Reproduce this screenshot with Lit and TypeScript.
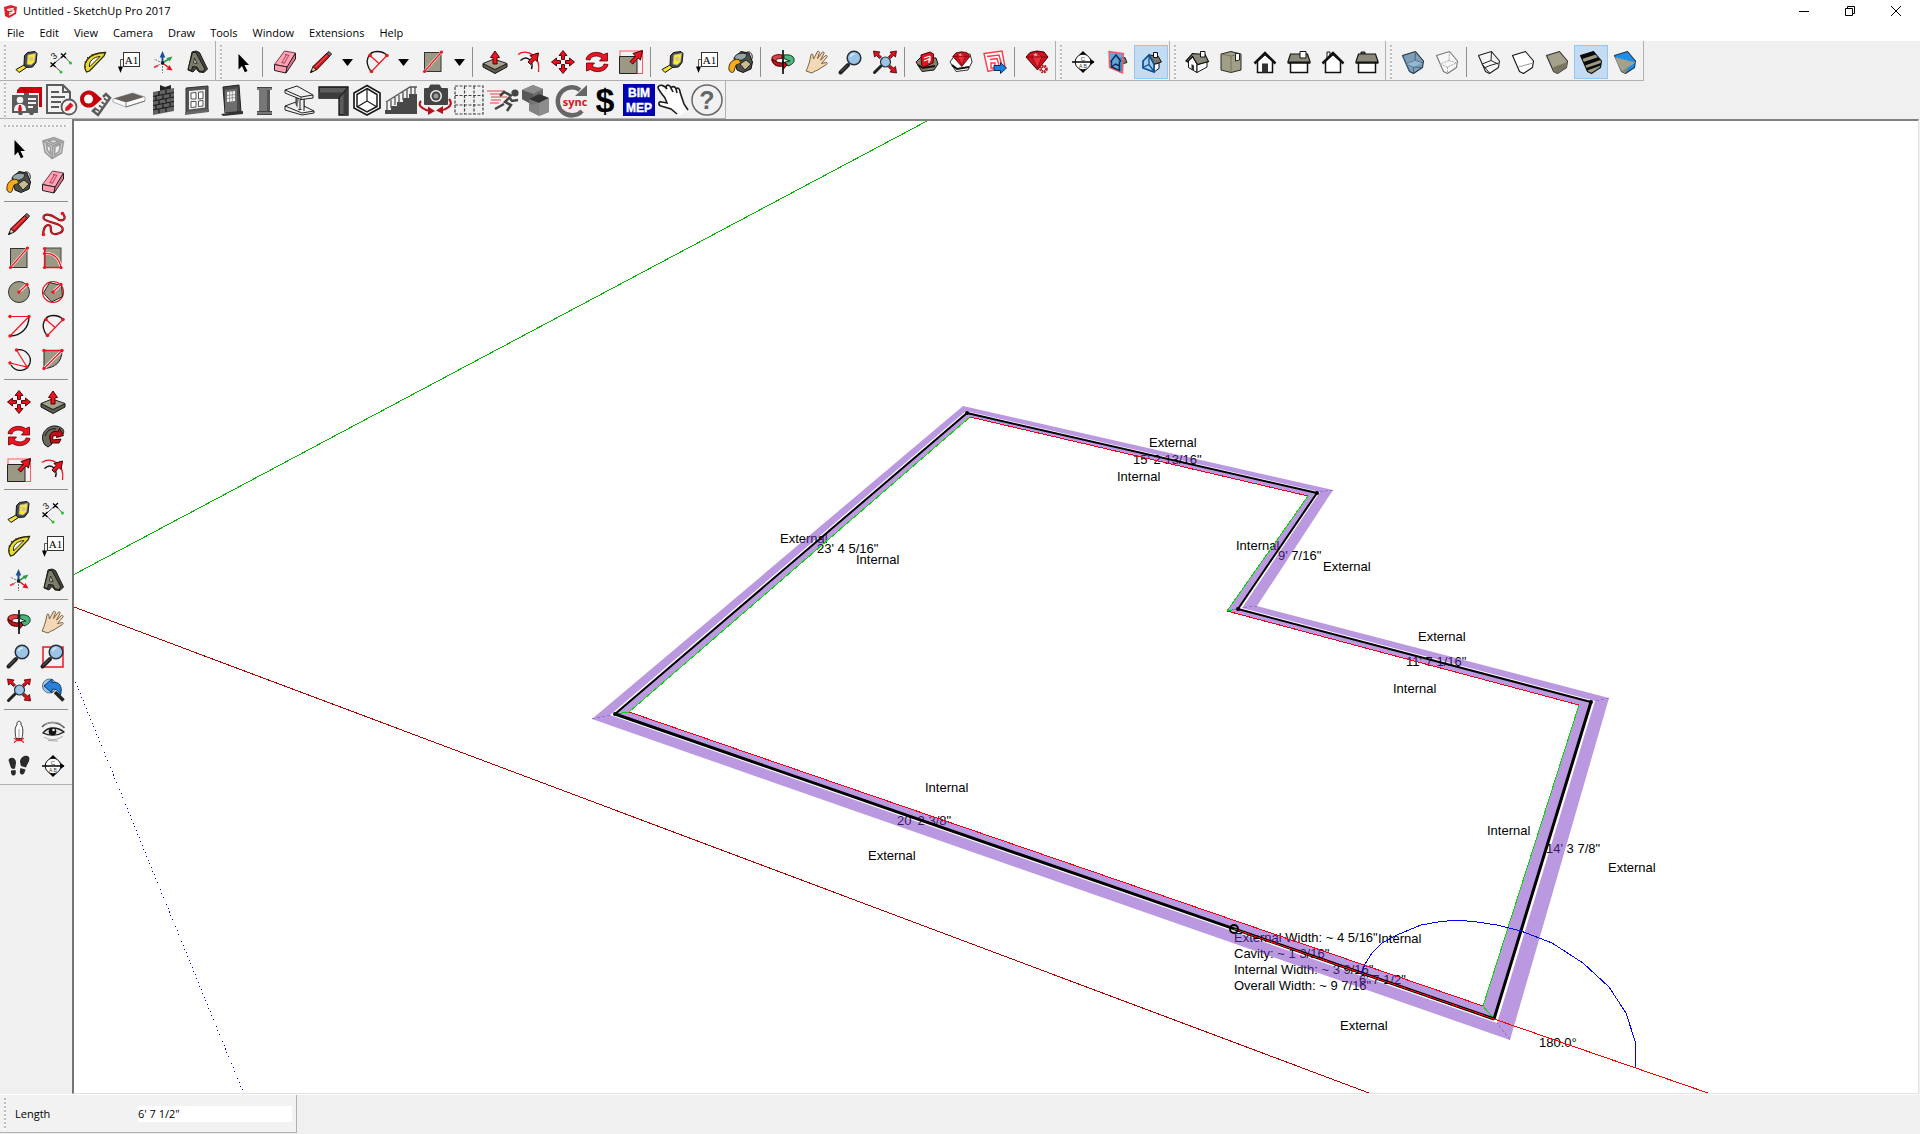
import { LitElement, html, css, svg } from "lit";
import { customElement, property } from "lit/decorators.js";

/* ---------- small tool icons, drawn on a 24 x 24 grid ---------- */

const magnifier = svg`
  <path d="M1.500 22.500 9 15" stroke="#222" stroke-width="4" stroke-linecap="round"/>
  <path d="M2 21.500 8 15.500" stroke="#6a6a6a" stroke-width="1"/>
  <circle cx="15" cy="8" r="6.800" fill="#9cc4e6" stroke="#26303a" stroke-width="1.500"/>
  <path d="M11.500 7a4 4 0 0 1 4-3" stroke="#d8ecfa" stroke-width="1.500" fill="none"/>`;

const arrowHead = (t: string) =>
  svg`<g transform=${t}><path d="M12 .500 16 5.500H13.500V9.500H10.500V5.500H8z" fill="#f00d1c" stroke="#3a0006" stroke-width=".9"/></g>`;

const bigArrow = svg`<path d="M11 11.500 16.500 6 14 3.500 23.500.500 21.500 10 19 7.800 13.800 14z" fill="#f0121f" stroke="#300" stroke-width="1"/>`;

const section = svg`
  <path d="M12 1 16 5H8zM12 23 8 19h8zM23.500 12l-5 4V8z" fill="#000"/>
  <circle cx="12" cy="12" r="7.800" fill="#fff" stroke="#111" stroke-width="1"/>
  <path d="M1 12H23" stroke="#000" stroke-width="1.500"/>
  <text x="12" y="10.500" font-size="6" text-anchor="middle" fill="#333">C</text>
  <text x="12" y="18" font-size="5" text-anchor="middle" fill="#333">A B</text>`;

const cube = (fill: string, line = "#222") => svg`
  <path d="M1.500 5.500 14.500 1.500 22.500 11 21.500 17.500 12.500 23.500 8.500 21.500z" fill=${fill} stroke=${line} stroke-width="1.100" stroke-linejoin="round"/>`;

const frontHouse = svg`
  <path d="M4.500 11V22.500H19.500V11L12 4.500z" fill="#fff" stroke="#111" stroke-width="1.500"/>
  <path d="M1.500 13.500 12 3 22.500 13.500" fill="none" stroke="#111" stroke-width="2.500"/>`;

const sideHouse = svg`
  <path d="M3.500 12H20.500V22.500H3.500z" fill="#fff" stroke="#111" stroke-width="1.500"/>
  <path d="M3.500 4H20.500L23 11.500V13H1V11.500z" fill="#8b897a" stroke="#111" stroke-width="1.200"/>
  <path d="M1 12.500H23" stroke="#111" stroke-width="2"/>`;

const gem = svg`
  <path d="M1 7 5 2.500 12 1 19 2 23 7 12.500 20z" fill="#d3101c" stroke="#3a0006"/>
  <path d="M1 7H23M7 7 12 2 17 7 12.500 18z" fill="#e8303c" stroke="#7d0610" stroke-width=".8"/>
  <path d="M8 5l3-2 1 3z" fill="#ffc4c4"/>`;

const tray = svg`
  <path d="M1 12 6 7 21 8 23 14 19 20 7 21.500z" fill="#85836f" stroke="#111"/>
  <path d="M3 15 8 18 20 16" fill="none" stroke="#111" stroke-width="2"/>`;

const ICONS: Record<string, unknown> = {
  tape: svg`
    <path d="M1 19.500 9 15l2.500 2.500L4 22.500z" fill="#f5e52a" stroke="#111"/>
    <path d="M9.500 5.500 12.500 2.500 20 1.500 22 3.500 21 12.500 17.500 17 11 17.500 9 15z" fill="#4b4b4b" stroke="#111"/>
    <path d="M13 5 20.500 3.500 19.500 12 16 15 12 14z" fill="#ffee22" stroke="#a8a8a8" stroke-width=".8"/>
    <circle cx="16.300" cy="9" r="2.400" fill="#cfc98a"/>`,
  dims: svg`
    <path d="M4 14.500 14.500 5.500M4 14.500 12 22M14.500 5.500 21.500 13" stroke="#555" fill="none"/>
    <path d="M1.500 12.500 6.500 17M6.500 12 1.500 17M12 3.500 17 8M17 3 12 8" stroke="#000" stroke-width="1.300"/>
    <text x="4" y="9" font-size="9" transform="rotate(-40 6 8)" fill="#111">3</text>
    <circle cx="12" cy="22" r="1.500" fill="#1ec52c"/><circle cx="21.500" cy="13" r="1.500" fill="#1ec52c"/>`,
  protractor: svg`
    <path d="M3.500 22C-1.500 14 5 2.500 22.500 2.500L21 6 6.500 21z" fill="#e9dc37" stroke="#2b2800" stroke-width="1.300"/>
    <path d="M6.500 17C5.500 11.500 10 7 17 6.500z" fill="#f2f2f2" stroke="#2b2800"/>
    <path d="M3 16.500 1.500 17M3.500 12.500 1.700 12M5.500 8.500 4 7M9.500 5.500 8.800 4M14 4.300v-1" stroke="#2b2800"/>`,
  label: svg`
    <rect x="6.500" y="2.500" width="16" height="14" fill="#fff" stroke="#333"/>
    <path d="M6 9.500H3.500V17" fill="none" stroke="#555"/>
    <path d="M1 16.500H6L3.500 23z" fill="#000"/>
    <text x="14.500" y="13.500" font-size="11" text-anchor="middle" font-family="Liberation Serif, serif" fill="#000">A1</text>`,
  axes: svg`
    <path d="M11.500 13V23M11.500 13 3 9M11.500 13 3 17.500" stroke="#777" stroke-dasharray="2 1" fill="none"/>
    <path d="M3 17.500 7 15.500" stroke="#e33" stroke-width="1.500"/>
    <path d="M11.500 13V6" stroke="#1c4f9c" stroke-width="2"/><path d="M11.500 1 14.300 7.500H8.700z" fill="#1c4f9c"/>
    <path d="M11.500 13 17 9.500" stroke="#2a9b45" stroke-width="1.500"/><path d="M21.500 6.500 18.500 11.500 15.500 8z" fill="#2a9b45"/>
    <path d="M11.500 13 17 17" stroke="#e0101c" stroke-width="1.500"/><path d="M21.500 20.500 15.500 19.500 18.500 15z" fill="#e0101c"/>
    <path d="M10 11.500h3v3h-3z" fill="#123"/>`,
  text3d: svg`
    <path d="M7 2 11 1 14.500 2.500 22.500 19 19 22.500 14 22 11 18.500 8 22 3 20z" fill="#45443c" stroke="#1a1a16"/>
    <path d="M3 19.500 7.500 2.500 11 2.500 19.500 18.500 18.500 21.500 14 21 12 17 7.500 16.500 6.500 20.500z" fill="#7d7b6b" stroke="#1a1a16"/>
    <path d="M8.500 13 9.500 8 12 13.500z" fill="#d8d8d0" stroke="#1a1a16" stroke-width=".8"/>`,
  select: svg`<path d="M7.500 4V19.500L11 16 13.800 22.300 16.500 21 13.500 15H18z" fill="#000"/>`,
  component: svg`
    <path d="M2 5 13 1.500 22.500 5.500 20.500 17 11 22.500 4 16z" fill="#d6d6d6" stroke="#9a9a9a" stroke-width="1.500"/>
    <path d="M2 5 12 9.500 22.500 5.500M12 9.500 11 22.500M5.500 8.500 9.500 11V18L6.500 14.500zM14 10.500 19.500 8.500 18 15.500 13.500 19zM7 5l6-1.500 5 2-6 2z" fill="#efefef" stroke="#9a9a9a" stroke-width="1.500"/>`,
  eraser: svg`
    <path d="M11.500 1 22.500 3 14.500 17 1.500 14.500z" fill="#ffa3b5" stroke="#7a3a48"/>
    <path d="M1.500 14.500 14 17 13 23 1.500 20.500z" fill="#ff9db1" stroke="#222"/>
    <path d="M14 17 22.500 3 22.500 9 13 23z" fill="#e0748c" stroke="#222"/>
    <path d="M9 12.500 13.500 4.500M11.500 13 16 5M12 4.500l4 .8M8.500 12.500l3.500.8" stroke="#b0405a" fill="none"/>`,
  pencil: svg`
    <path d="M1.500 22.500 4 16.500 7.500 20z" fill="#e6c88f" stroke="#222"/><path d="M1 23 2.500 19.800 4.500 21.800z" fill="#111"/>
    <path d="M4 16.500 17.500 3.500 20.500 6.500 7.500 20z" fill="#d3161d" stroke="#300" />
    <path d="M6 17.500 19 4.500" stroke="#f2706f" stroke-width="1"/>
    <path d="M17.500 3.500 20 1.500 22.500 4 20.500 6.500z" fill="#8a5a55" stroke="#222"/>`,
  freehand: svg`
    <g transform="translate(1 0)">
      <path d="M20.500 1.500C26 7 20 11 14 6 9 2 1 1 1.500 6 3 11 18 10 20.500 16 22 21 13 23.500 10 21 7 18 11 13 6 13 2 14 1 19 1.500 22.500" fill="none" stroke="#8c0008" stroke-width="2.200"/>
      <path d="M20.500 1.500C26 7 20 11 14 6 9 2 1 1 1.500 6 3 11 18 10 20.500 16 22 21 13 23.500 10 21 7 18 11 13 6 13 2 14 1 19 1.500 22.500" fill="none" stroke="#f0343c" stroke-width=".8"/>
      <circle cx="1.500" cy="22.500" r="1.800" fill="#f0141e"/><circle cx="20.500" cy="1.500" r="1.800" fill="#f0141e"/>
    </g>`,
  rect: svg`
    <rect x="3.500" y="2.500" width="16.500" height="19" fill="#9b9984" stroke="#333"/>
    <path d="M3.500 21.500 20.500 2" stroke="#fff" stroke-width="2.500"/><path d="M3.500 21.500 20.500 2" stroke="#f01420" stroke-width="1.300"/>
    <circle cx="3.500" cy="21.500" r="1.600" fill="#f01420"/><circle cx="20.500" cy="2" r="1.600" fill="#f01420"/>`,
  rotrect: svg`
    <rect x="4" y="2" width="16" height="19.500" fill="#9b9984" stroke="#444"/>
    <path d="M3.500 7.500C12 6.500 18 12 20 21.500" fill="none" stroke="#fff" stroke-width="3"/>
    <path d="M3.500 7.500C12 6.500 18 12 20 21.500M3.500 21.500H20M3.500 2V21.500" fill="none" stroke="#f01420" stroke-width="1.300"/>
    <circle cx="3.500" cy="2.500" r="1.600" fill="#f01420"/><circle cx="3.500" cy="7.500" r="1.600" fill="#f01420"/><circle cx="3.500" cy="21.500" r="1.600" fill="#f01420"/><circle cx="20" cy="21.500" r="1.600" fill="#f01420"/>`,
  circle: svg`
    <circle cx="12" cy="12" r="10.500" fill="#9b9984" stroke="#333"/>
    <path d="M12 12 20 4.500" stroke="#fff" stroke-width="3"/><path d="M12 12 20 4.500" stroke="#f01420" stroke-width="1.300"/>
    <circle cx="12" cy="12" r="1.700" fill="#f01420"/><circle cx="20" cy="4.500" r="1.700" fill="#f01420"/>`,
  polygon: svg`
    <circle cx="12" cy="12" r="10.500" fill="none" stroke="#f01420" stroke-width="1.200"/>
    <path d="M8.500 2.500 20.500 5.500 21.500 16.500 10.500 22 2.500 13z" fill="#9b9984" stroke="#222"/>
    <path d="M12 12 20 4.500" stroke="#fff" stroke-width="3"/><path d="M12 12 20 4.500" stroke="#f01420" stroke-width="1.300"/>
    <circle cx="12" cy="12" r="1.700" fill="#f01420"/><circle cx="20" cy="4.500" r="1.700" fill="#f01420"/>`,
  arcCorner: svg`
    <path d="M22 2.500C22 14 14 22 3 22" fill="none" stroke="#111" stroke-width="1.300"/>
    <path d="M3 2.500H22L3 22" fill="none" stroke="#f01420" stroke-width="1.200"/>
    <circle cx="3" cy="2.500" r="1.700" fill="#f01420"/><circle cx="22" cy="2.500" r="1.700" fill="#f01420"/><circle cx="3" cy="22" r="1.700" fill="#f01420"/>`,
  arc: svg`
    <path d="M6 21.500C-2 11 4 1.500 12 1.500 17 1.500 20 3 22 5.500" fill="none" stroke="#111" stroke-width="1.300"/>
    <path d="M6.500 21.500 22 5.500M5 5.500 14 13.500" fill="none" stroke="#f01420" stroke-width="1.200"/>
    <circle cx="6.500" cy="21.500" r="1.800" fill="#f01420"/><circle cx="22" cy="5.500" r="1.800" fill="#f01420"/><circle cx="5" cy="5.500" r="1.800" fill="#f01420"/>`,
  arc3: svg`
    <path d="M9.500 2C18 0 25 8 23 15 20 24 9 25 4 17" fill="none" stroke="#111" stroke-width="1.300"/>
    <path d="M9.500 2 20 19 3 15" fill="none" stroke="#f01420" stroke-width="1.200"/>
    <circle cx="9.500" cy="2" r="1.700" fill="#f01420"/><circle cx="20" cy="19" r="1.700" fill="#f01420"/><circle cx="3" cy="15" r="1.700" fill="#f01420"/>`,
  pie: svg`
    <path d="M3 2.500H21C21 14 14 20 3 20.500z" fill="#9b9984" stroke="#222"/>
    <path d="M3 20.500 21 2.500" stroke="#fff" stroke-width="3"/>
    <path d="M3 20.500 21 2.500M3 2.500H21" stroke="#f01420" stroke-width="1.300"/>
    <circle cx="3" cy="2.500" r="1.700" fill="#f01420"/><circle cx="21" cy="2.500" r="1.700" fill="#f01420"/><circle cx="3" cy="20.500" r="1.700" fill="#f01420"/>`,
  pushpull: svg`
    <path d="M0 13.500 12 19.500 24 13.500V17L12 23.500 0 17z" fill="#5e5d4e" stroke="#111"/>
    <path d="M0 13.500 11 9 24 13.500 12 19.500z" fill="#a5a38d" stroke="#222"/>
    <path d="M12 1 16.500 7.500H14V14H10V7.500H7.500z" fill="#f01420" stroke="#500"/>`,
  offset: svg`
    <path d="M1 4.500C10-2 24 6 21.500 22" fill="none" stroke="#f01420" stroke-width="1.300"/>
    <path d="M3.500 10.500C10 4.500 17 11 14.500 19" fill="none" stroke="#111" stroke-width="1.500"/>
    <path d="M11 12 15 7.500 13 5.500 21.500 3 20 11.500 18 9.500 13.500 14.500z" fill="#f0121f" stroke="#300"/>`,
  move: svg`${arrowHead("")}${arrowHead("rotate(90 12 12)")}${arrowHead("rotate(180 12 12)")}${arrowHead("rotate(270 12 12)")}`,
  rotate: svg`
    <path d="M1 9.500C2 3 12 0 18.500 4.500L22.500 3V11H14.500L17 8C12 4.500 6 6 5 10z" fill="#f0121f" stroke="#5a0008" stroke-width=".8"/>
    <path d="M23 14.500C22 21 12 24 5.500 19.500L1.500 21V13H9.500L7 16C12 19.500 18 18 19 14z" fill="#f0121f" stroke="#5a0008" stroke-width=".8"/>`,
  scale: svg`
    <rect x="1" y="1" width="22.500" height="22.500" fill="none" stroke="#ff5a60"/>
    <path d="M.500 6.500H18V23.500H.500z" fill="#9b9984" stroke="#222"/>${bigArrow}`,
  follow: svg`
    <path d="M4 21C-3 11 6 1 15 2 22 3 24 7 22 10L16 8C12 7 8 10 9 15L11 20 7 23z" fill="#6b695d" stroke="#111"/>
    <path d="M4.500 12C5 7 10 4 15 5" fill="none" stroke="#111"/>
    <path d="M9 14C8 9 13 6 17 8L18.500 4.500 22.500 11.500 15.500 13.500 16 12C13 11 11 12 12 16L20 15 18 19 10 19z" fill="#c3121b" stroke="#400"/>`,
  paint: svg`
    <path d="M5 8 12 1.500 20 3 23.500 12 22 19 14 22.500 8 20z" fill="#4c4e48" stroke="#111"/>
    <path d="M5 8C7 3 14 2 18 4.500 17 10 11 11 8 10z" fill="#93a5a8" stroke="#222"/>
    <path d="M11 14 17 10 22 14 16 20z" fill="#c8ba92" stroke="#222"/>
    <path d="M0 20C-1 13 4 8.500 10 9.500L12 13 7 15 5 21C5 23 1 23 0 20z" fill="#f6aa1f" stroke="#4c3000"/>
    <path d="M18 2C22 1 24 5 23 9" fill="none" stroke="#222"/>`,
  orbit: svg`
    <path d="M1 8C1 5 8 4 11 5V8.500C7 8.500 5 9 5 11H1z" fill="#d9444a" stroke="#500"/>
    <path d="M13 5C20 4 24 7 23 11 23 13 20 15 17 16L14 12 19 11 13 8.500z" fill="#4fb57e" stroke="#0d3a20"/>
    <path d="M1 9C1 16 8 17 12 16V19.500L16 15 12 11V13C8 13 5 12 1 9z" fill="#b8141e" stroke="#400"/>
    <path d="M12 0V24" stroke="#111" stroke-width="1.700"/>`,
  pan: svg`
    <path d="M1 21C3 18 3 15 4.500 12L6 4.500C7 3.500 8 4 8 6L8.500 9 12.500 1.500C13.500 1 14.500 1.500 14.500 2.500L12.500 8.500 17.500 2C18.500 1.500 19.500 2.500 19 3.500L15.500 10 20.500 5.500C21.500 5 22.500 6 22 7L16.500 13.500 21 12.500C22.500 12.500 22.500 14 21.500 14.500L15 18.500C12 21 10 20.500 7 23z" fill="#f3d8b6" stroke="#6d5436" stroke-width=".9"/>`,
  zoom: magnifier,
  zoomWindow: svg`<rect x="2" y="3" width="20" height="20" fill="none" stroke="#f01420" stroke-width="1.500"/>${magnifier}`,
  extents: svg`
    <path d="M1.500 22.500 8 16" stroke="#222" stroke-width="3" stroke-linecap="round"/>
    <circle cx="12.500" cy="12" r="5" fill="#9cc4e6" stroke="#26303a" stroke-width="1.200"/>
    <path d="M.500 1 7 2 5.500 4 8.500 7 6.500 8.500 3.500 5.500 1.500 7zM23.500 1 22.500 7 20.500 5.500 17.500 8.500 15.500 6.500 18.500 4 17 2zM23.500 23 17 22 18.500 20 15.500 17.500 17.500 15.500 20.500 18 22.500 16.500z" fill="#e0101c" stroke="#400" stroke-width=".8"/>`,
  previous: svg`
    <circle cx="8.500" cy="8" r="7" fill="#9cc4e6" stroke="#55708a"/>
    <path d="M14 14 22.500 22.500" stroke="#222" stroke-width="3.500"/>
    <path d="M3 8 11 1V4.500C18 3 22 8 19.500 17 17 12 15 10.500 11 11.500V15z" fill="#2a80d8" stroke="#0c3766"/>`,
  warehouse: svg`${tray}<path d="M6 5 15 2 18.500 4 18 13 9 17 6.500 15z" fill="#e0141f" stroke="#500"/><path d="M9 8l6-2M9 11l5-2v4M15 6v5" stroke="#fff" stroke-width="1.300" fill="none"/>`,
  extwarehouse: svg`<path d="M1 12 6 5 21 4 23 12 19 20 7 21.500z" fill="#fff" stroke="#333"/><path d="M3 15 8 19 20 17" fill="none" stroke="#111" stroke-width="2"/><g transform="translate(3 1) scale(.78)">${gem}</g>`,
  share: svg`
    <path d="M1 3.500 19 1 22 17 5 21.500z" fill="#fff" stroke="#ff3a44" stroke-width="1.400"/>
    <path d="M4 6.500 16 5 19 16M7 9.500 14 8.500 16 15M8 13h4v5H8z" fill="none" stroke="#ff3a44" stroke-width="1.400"/>
    <path d="M11 15.500H17.500V12.500L23.500 18 17.500 23.500V20.500H11z" fill="#1a80e0" stroke="#0b2f5a"/>`,
  extmanager: svg`${gem}<circle cx="18.500" cy="19" r="3.200" fill="#fff" stroke="#c8141e" stroke-width="2.200" stroke-dasharray="1.800 .8"/><circle cx="18.500" cy="19" r="2" fill="#fff" stroke="#b0101a"/>`,
  section,
  sectionDisplay: svg`
    <path d="M14 8 20 7.500 22 12.500 17 14v6l-3 2z" fill="#77766a" stroke="#222"/>
    <path d="M4 1.500 18.500 3.500 17.500 23 4.500 17.500z" fill="#4f97d6" fill-opacity=".85" stroke="#ff5560" stroke-width="1.300"/>
    <path d="M5.500 12 11 5 16 11.500M6.500 11v6l8 3.500v-9M6.500 17l4-3 4 2" fill="none" stroke="#0b2c4c" stroke-width="1.400"/>`,
  sectionCut: svg`
    <path d="M10 5 19 6 22.500 12 15 14.500z" fill="#77766a" stroke="#111"/><path d="M15 14.500 20 13V18.500L15 22z" fill="#fff" stroke="#111"/>
    <path d="M14.500 2.500h4v5h-4z" fill="#fff" stroke="#111"/>
    <path d="M4 11 10 5 15 14V22L4 18z" fill="#a9cfee" stroke="#0a4f93" stroke-width="1.700"/>
    <path d="M4 17.500l6-3 5 7M10 6v8.500" fill="none" stroke="#0a4f93" stroke-width="1.300"/>`,
  iso: svg`
    <path d="M3.500 10.500V17.500L12 22.500V14L8 7z" fill="#fff" stroke="#111"/><path d="M12 22.500 22 17V11L12 15z" fill="#fff" stroke="#111"/>
    <path d="M6.500 14 9 15.500V21L6.500 19.500z" fill="#333"/>
    <path d="M1 11 7.500 3.500 20 4.500 23.500 11.500 12.500 14.500 7.500 6.500 2.500 12z" fill="#8b897a" stroke="#111" stroke-width="1.200"/>
    <path d="M15.500 1.500h4.500v5.500h-4.500z" fill="#fff" stroke="#111"/>`,
  top: svg`
    <path d="M2 4 12 1.500 22 4V20L12 22.500 2 20z" fill="#a09e86" stroke="#2a2a20"/><path d="M12 6V22.500M2 4 12 6 22 4" fill="none" stroke="#77755f"/>
    <path d="M16.500 3.500h4V10L16.500 11z" fill="#fff" stroke="#222"/>`,
  front: svg`${frontHouse}<path d="M9 13.500h6V22.500H9z" fill="#333"/>`,
  right: svg`${sideHouse}<path d="M13 1.500h6V8h-6z" fill="#fff" stroke="#111"/>`,
  back: svg`<path d="M6 2h3v5l-3 3z" fill="#fff" stroke="#111"/>${frontHouse}`,
  left: svg`<path d="M6 2h4v3H6z" fill="#666" stroke="#111"/>${sideHouse}`,
  xray: svg`${cube("#7f9fb8", "#1d3142")}<path d="M1.500 5.500 5 14 14 10.500 22 13M14.500 1.500 14 10.500M8.500 21.500 5 14M5 14 12.500 17 21.500 17.500M12.500 17V23" fill="none" stroke="#46657e"/><path d="M5 14 14 10.500 21 13 12.500 17z" fill="#9cc4e0" fill-opacity=".7"/>`,
  backedges: svg`${cube("#f7f7f7", "#777")}<path d="M14.500 1.500 14 10.500 5 14M14 10.500 22 13M5 14 12.500 17 21.500 13M12.500 17V23" fill="none" stroke="#aaa" stroke-dasharray="2 1"/>`,
  wire: svg`${cube("#f6f6f6", "#222")}<path d="M14.500 1.500 14 10.500 5 14M14 10.500 21 14M7 18 13 15.500 21.500 13M5 14 12.500 23" fill="none" stroke="#222"/>`,
  hidden: svg`${cube("#fff", "#111")}<path d="M7.500 17 22 13" fill="none" stroke="#999"/>`,
  shaded: svg`${cube("#a3a18c", "#333")}<path d="M7.500 17.500 22.500 12 21.500 17.500 12.500 23.500 8.500 21.500z" fill="#77755f"/>`,
  textures: svg`${cube("#9b9984", "#111")}
    <path d="M1.500 5.500 14.500 1.500 17 4.500 3 9zM4.500 12 19 7.200 21.500 10 6 15.500zM7 18 22 13 22 15.500 8 20.500z" fill="#0a0a0a"/>`,
  mono: svg`${cube("#1a8fee", "#234")}<path d="M1.500 7 22.500 12.500 8.500 21.500z" fill="#a3a18c"/><path d="M8.500 21.500 16 16.500 12.500 23.500z" fill="#8b8973"/>`,
  camera: svg`
    <path d="M10 3.500C10 .500 14 .500 14 3.500V5C16.500 7 16 13 15 18.500H9C8 13 7.500 7 10 5z" fill="#fff" stroke="#333"/>
    <path d="M12 9V18" stroke="#888" stroke-width=".8"/>
    <path d="M7 22.500 12 19 17 22.500M7 18.500 12 20.500 17 18.500" stroke="#f01420" stroke-width="1.300" fill="none"/>`,
  eye: svg`
    <path d="M1 7C7 1 17 1 23.500 8" stroke="#555" stroke-width="1.500" fill="none"/>
    <path d="M2 13C7 6 17 7 23 12 17 16 8 16 2 13z" fill="#ddd" stroke="#222" stroke-width="1.300"/>
    <circle cx="11.500" cy="11.500" r="3.800" fill="#111"/><circle cx="12.500" cy="10" r="1.300" fill="#eee"/>
    <path d="M3 17C9 21 17 20 22 16M7 20.500 17 21M4 5C8 2 15 1 20 4" stroke="#aaa" fill="none"/>`,
  walk: svg`
    <path d="M1.500 6C3.500 2 9.500 4 9 9L8 14.500C6 15.500 4 14.500 3.500 12.500zM4 16.500 8.500 16C9.500 20 8 22 6 21.500 4 21 3.800 19 4 16.500z" fill="#2b2b2b"/>
    <path d="M13 8C13 3 19 0 22 3 23.500 7 20 10 19 13.500L14 12zM13.500 14 18.500 15.500C17.500 20 16 21 14.500 20.500 12.500 20 12.500 17 13.500 14z" fill="#2b2b2b"/>`,
};

/* ---------- large plugin icons, drawn on a 32 x 32 grid ---------- */

const PLUGINS: Record<string, unknown> = {
  profile: svg`
    <path d="M6 6 9 3H18L20 3H31V23H28V9H6z" fill="#c8000c"/>
    <path d="M1 11H13V9H18V11H27V29H23L22 31H19L18 29H12L11 31H8L7 29H1z" fill="#5b5b5b"/>
    <circle cx="9" cy="16" r="3.300" fill="#f1f1f1"/><path d="M3 27C3 22 5 20 9 20S15 22 15 27z" fill="#f1f1f1"/>
    <path d="M8 21h2l1 5-2 2-2-2z" fill="#d9101c"/><path d="M17 15h8M17 19h8M17 23h5" stroke="#f1f1f1" stroke-width="2"/>`,
  document: svg`
    <path d="M2 1H18L25 8V29H2z" fill="#f1f1f1" stroke="#5b5b5b" stroke-width="2"/><path d="M18 1V8H25" fill="none" stroke="#5b5b5b" stroke-width="2"/>
    <path d="M6 8h8M6 13h14M6 18h10M6 23h8" stroke="#5b5b5b" stroke-width="2"/>
    <circle cx="24" cy="23" r="7.500" fill="#f4f4f4" stroke="#5b5b5b" stroke-width="1.800"/>
    <path d="M20 27 20.500 23.500 25.500 18.500 28.500 21.500 23.500 26.500z" fill="#d81824"/>`,
  locate: svg`
    <path d="M17 24 14 27 19 31 31 14 27 10 24 13" fill="none" stroke="#5b5b5b" stroke-width="2.500"/>
    <path d="M17 25l3 2M20 21.500l3 2M22.500 18l3 2M25 14.500l3 2" stroke="#5b5b5b" stroke-width="2"/>
    <path d="M23 15 15 22C9 26 1 22 1 15S9 4 15 8z" fill="#c4000c"/><circle cx="9.500" cy="15" r="4.500" fill="#fff"/>`,
  slab: svg`
    <path d="M0 15 20 9 32 13V17L13 23 0 18z" fill="#fafafa" stroke="#999" stroke-width=".8"/>
    <path d="M1 14.500 19.500 9 31 13 13 18.500z" fill="#66605c"/><path d="M13 19V23L32 17" fill="none" stroke="#777"/>`,
  wall: svg`
    <g transform="translate(4 0)">
      <path d="M9 7V1L14 3 20 1V6z" fill="#222"/><path d="M2 8 23 4V27L2 31z" fill="#636363"/>
      <path d="M2 12.500 23 8.500M2 17 23 13M2 21.500 23 17.500M2 26 23 22M8 7v4M15 6v4M5 12v4M12 11v4M19 9v4M8 16v4M15 15v4M5 21v4M12 20v4M19 18v4M8 25v4M15 24v4" stroke="#1b1b1b" stroke-width="1.200"/>
    </g>`,
  window: svg`
    <path d="M5 4 27 2V26L5 29z" fill="#555" stroke="#333"/><path d="M4 28 28 25V28L4 31z" fill="#666"/>
    <path d="M8 7 24 5.500V23.500L8 25.500z" fill="#ededed"/><path d="M10 9 15 8.500V15H10zM17.500 8.200 22 7.800V14.500L17.500 15zM10 17.500H15V23L10 23.500zM17.500 17 22 16.500V22L17.500 22.500z" fill="#fff" stroke="#555"/>`,
  door: svg`
    <g transform="translate(1 0)">
      <path d="M7 3 23 1 25 28 9 29z" fill="#484848" stroke="#222"/><path d="M9 6 21 4.500V27L9 28.500z" fill="#6d6d6d"/>
      <path d="M11 8 19 7V17L11 18z" fill="#f2f2f2"/><path d="M13.500 8v10M16.300 7v10M11 11.500l8-1M11 14.500l8-1" stroke="#888" stroke-width=".8"/>
      <path d="M5 30 27 27V30L7 32z" fill="#333"/>
    </g>`,
  column: svg`<path d="M8 3H23V6H21V27H23V31H8V27H10V6H8z" fill="#777"/><path d="M8 3.500H23M8 27.500H23M8 30.500H23" stroke="#444"/><path d="M18 6h3v21h-3z" fill="#555"/>`,
  beam: svg`
    <path d="M2 22 13 18 29 26 31 27V29L19 31 2 26z" fill="#f0f0f0" stroke="#222"/>
    <path d="M13 9H21V24L16 26 13 20z" fill="#777" stroke="#333"/>
    <path d="M16 14 21 12V25L14 25z" fill="#ededed"/>
    <path d="M2 6 14 2 30 11V14L18 15.500 2 9z" fill="#f0f0f0" stroke="#222"/><path d="M2 6 18 13 30 11M2 22 19 29 31 27M18 13v2.500" fill="none" stroke="#222"/>
    <path d="M21 15V27M17 16V26" stroke="#222"/>`,
  roof: svg`<g transform="translate(1 0)"><path d="M1 3H30V31H21V14H1z" fill="#5c5c5c" stroke="#111" stroke-width="1.300"/><path d="M30 3 21 14H1V8.500H25.500V31H30z" fill="#3c3c3c"/><path d="M30 3 21 14" stroke="#111"/></g>`,
  hexagon: svg`
    <path d="M16 1.500 29 9V24L16 31 3 24V9z" fill="#fff" stroke="#1a1a1a" stroke-width="1.700"/>
    <path d="M16 4.500 26 10.500V22.500L16 28 6 22.500V10.500z" fill="none" stroke="#1a1a1a" stroke-width="1.500"/>
    <path d="M16 5V17L26 23M16 17 6 23" fill="none" stroke="#1a1a1a" stroke-width="1.200"/>`,
  stairs: svg`
    <path d="M0 30V26H6V22H12V18H18V14H24V10H32V30z" fill="#484848"/>
    <path d="M1 18 25 3H32M2 18v8M6 16v8M10 13v8M14 11v9M18 8v8M22 5v9M26 3v8M30 3v8" stroke="#555" fill="none" stroke-width="1.300"/>`,
  photo: svg`
    <path d="M6 5H10L12 1.500H20L22 5H28V20H6z" fill="#444" stroke="#444" stroke-linejoin="round" stroke-width="2"/>
    <circle cx="17" cy="12" r="6" fill="#f0f0f0"/><circle cx="17" cy="12" r="4.500" fill="#444"/><circle cx="17" cy="12" r="2.500" fill="#999"/>
    <path d="M2 17C-3 22 6 26 11 27M30 15C36 22 26 26 20 27" fill="none" stroke="#b4101a" stroke-width="2.200"/><path d="M9 22.500 16 27 9 31zM24 22 17 26.500 24 30z" fill="#b4101a"/>`,
  grid: svg`<path d="M2 2H30V30H2zM11.500 2V30M21 2V30M2 11.500H30M2 21H30" fill="none" stroke="#444" stroke-width="1.200" stroke-dasharray="3 1.500"/>`,
  run: svg`
    <path d="M0 7H18M3 10H16M4 13H20M4 16H14M3 19H12" stroke="#d8323a" stroke-width=".9"/>
    <circle cx="28" cy="9" r="3.600" fill="#444"/>
    <path d="M25 12 17 8 13 12M23 13 18 18 24 21 20 27M17 20 8 25M22 13 25 17 31 16" fill="none" stroke="#444" stroke-width="2.500"/>`,
  cubes: svg`
    <path d="M1 6 12 1 22 5V16L12 21 1 15z" fill="#6b6b6b"/><path d="M1 6 12 10 22 5 12 1z" fill="#8d8d8d"/><path d="M12 10V21L1 15V6z" fill="#585858"/>
    <path d="M8 15 18 10 28 14V28L18 32 8 27z" fill="#777" fill-opacity=".9"/><path d="M8 15 18 19 28 14 18 10z" fill="#333"/><path d="M18 19V32L28 28V14z" fill="#8d8d8d"/>`,
  sync: svg`
    <path d="M27 27A14 14 0 1 1 25 6" fill="none" stroke="#666" stroke-width="4.500"/><path d="M32 1V12H20z" fill="#666"/>
    <rect x="7" y="12" width="25" height="13" fill="#f1f1f1"/>
    <text x="20" y="22" font-size="11" font-weight="bold" text-anchor="middle" fill="#d8141e" font-family="Open Sans, sans-serif">sync</text>`,
  dollar: svg`<text x="16" y="28" font-size="34" font-weight="bold" text-anchor="middle" fill="#000" font-family="Liberation Sans, Arial, sans-serif">$</text>`,
  bim: svg`
    <rect x="0" y="0" width="32" height="32" fill="#0000b4"/>
    <g font-family="Liberation Sans, Arial, sans-serif" font-weight="bold" font-size="12" text-anchor="middle" fill="#fff" stroke="#fff" stroke-width=".4"><text x="16" y="13">BIM</text><text x="16" y="27.500">MEP</text></g>`,
  hand: svg`
    <path d="M1 3C3 1 6 3 11 12L9 4C10 1 13 1 14 4 15 2 18 2 19 5 21 3 23 5 23 8L27 20 31 26 22 32 14 25 4 22C1 21 1 17 5 18L10 19 3 7z" fill="#fff"/>
    <path d="M31 26 27 20 23 8C23 5 21 3 19 5 18 2 15 2 14 4 13 1 10 0 9 3L10 5C7 1 3 0 1 3 1 6 6 11 8 14L10 19 5 18C1 17 1 21 4 22L14 25 20 30M14 4 16 8M19 5 20 9" fill="none" stroke="#1c1c1c" stroke-width="1.600"/>`,
  help: svg`<circle cx="16" cy="16" r="15" fill="none" stroke="#666" stroke-width="1.500"/>
    <text x="16" y="25" font-size="25" font-weight="bold" text-anchor="middle" fill="#666" font-family="Liberation Sans, Arial, sans-serif">?</text>`,
};

/* ---------- toolbar descriptions ---------- */

type Item = { icon: string; name: string; on?: boolean; menu?: boolean } | "sep";
const t = (icon: string, name: string, extra: object = {}): Item => ({ icon, name, ...extra });

const CONSTRUCTION = [
  t("tape", "Tape Measure"), t("dims", "Dimension"), t("protractor", "Protractor"),
  t("label", "Text"), t("axes", "Axes"), t("text3d", "3D Text"),
];

const TOP_BARS: { name: string; items: Item[] }[] = [
  { name: "Construction", items: CONSTRUCTION },
  {
    name: "Getting Started",
    items: [
      t("select", "Select"), "sep", t("eraser", "Eraser"),
      t("pencil", "Line", { menu: true }), t("arc", "2 Point Arc", { menu: true }), t("rect", "Rectangle", { menu: true }), "sep",
      t("pushpull", "Push/Pull"), t("offset", "Offset"), t("move", "Move"), t("rotate", "Rotate"), t("scale", "Scale"), "sep",
      t("tape", "Tape Measure Tool"), t("label", "Text Tool"), t("paint", "Paint Bucket"), "sep",
      t("orbit", "Orbit"), t("pan", "Pan"), t("zoom", "Zoom"), t("extents", "Zoom Extents"), "sep",
      t("warehouse", "3D Warehouse"), t("extwarehouse", "Extension Warehouse"), t("share", "Send to LayOut"), "sep",
      t("extmanager", "Extension Manager"),
    ],
  },
  { name: "Section", items: [t("section", "Section Plane"), t("sectionDisplay", "Display Section Planes"), t("sectionCut", "Display Section Cuts", { on: true })] },
  { name: "Views", items: [t("iso", "Iso"), t("top", "Top"), t("front", "Front"), t("right", "Right"), t("back", "Back"), t("left", "Left")] },
  {
    name: "Styles",
    items: [
      t("xray", "X-Ray"), t("backedges", "Back Edges"), "sep",
      t("wire", "Wireframe"), t("hidden", "Hidden Line"), t("shaded", "Shaded"), t("textures", "Shaded With Textures", { on: true }), t("mono", "Monochrome"),
    ],
  },
];

const SIDE: Item[] = [
  t("select", "Select"), t("component", "Make Component"), t("paint", "Paint Bucket"), t("eraser", "Eraser"), "sep",
  t("pencil", "Line"), t("freehand", "Freehand"), t("rect", "Rectangle"), t("rotrect", "Rotated Rectangle"),
  t("circle", "Circle"), t("polygon", "Polygon"), t("arcCorner", "Arc"), t("arc", "2 Point Arc"), t("arc3", "3 Point Arc"), t("pie", "Pie"), "sep",
  t("move", "Move"), t("pushpull", "Push/Pull"), t("rotate", "Rotate"), t("follow", "Follow Me"), t("scale", "Scale"), t("offset", "Offset"), "sep",
  t("tape", "Tape Measure"), t("dims", "Dimension"), t("protractor", "Protractor"), t("label", "Text"), t("axes", "Axes"), t("text3d", "3D Text"), "sep",
  t("orbit", "Orbit"), t("pan", "Pan"), t("zoom", "Zoom"), t("zoomWindow", "Zoom Window"), t("extents", "Zoom Extents"), t("previous", "Previous"), "sep",
  t("camera", "Position Camera"), t("eye", "Look Around"), t("walk", "Walk"), t("section", "Section Plane"),
];

const PLUGIN_NAMES: [string, string][] = [
  ["profile", "Profile"], ["document", "Document"], ["locate", "Locate"], ["slab", "Slab"], ["wall", "Wall"], ["window", "Window"],
  ["door", "Door"], ["column", "Column"], ["beam", "Beam"], ["roof", "Roof"], ["hexagon", "Component"], ["stairs", "Stairs"],
  ["photo", "Camera"], ["grid", "Grid"], ["run", "Quick Build"], ["cubes", "Assemblies"], ["sync", "Sync"], ["dollar", "Estimate"],
  ["bim", "BIM MEP"], ["hand", "Pick"], ["help", "Help"],
];

const MENUS = ["File", "Edit", "View", "Camera", "Draw", "Tools", "Window", "Extensions", "Help"];

const barStyles = css`
  * { box-sizing: border-box; }
  button { padding: 0; border: 1px solid transparent; background: none; font: inherit; color: inherit; }
  button:hover, button.on { background: #c3dcf3; border-color: #90c8f6; }
  button { display: flex; align-items: center; justify-content: center; flex: none; }
  svg { display: block; overflow: visible; flex: none; fill: none; }
`;

@customElement("tool-bar")
class ToolBar extends LitElement {
  @property({ attribute: false }) items: Item[] = [];
  @property({ type: Boolean, reflect: true }) vertical = false;

  static styles = [
    barStyles,
    css`
      :host { display: flex; flex: none; background: #f2f2f2; border: solid #b0b0b0; border-width: 0 1px 1px 0; padding: 4px 1px 1px 0; font-family: "Liberation Sans", Arial, sans-serif; }
      .grip { width: 10px; flex: none; background: repeating-linear-gradient(#bdbdbd 0 2px, #fafafa 2px 4px) 4px 0 / 2px 100% no-repeat; }
      .tool { width: 34px; height: 34px; }
      .split { display: flex; width: 56px; }
      .main { width: 38px; height: 34px; }
      .caret { width: 14px; height: 34px; }
      .sep { width: 1px; margin: 2px 5px 2px 2px; background: #8e8e8e; }
      :host([vertical]) { display: grid; grid-template-columns: 34px 34px; padding: 2px 1px 1px 2px; border-right: 0; }
      :host([vertical]) .grip { grid-column: span 2; width: auto; height: 10px; margin: 0 2px; background: repeating-linear-gradient(90deg, #bdbdbd 0 2px, #fafafa 2px 4px) 0 4px / 100% 2px no-repeat; }
      :host([vertical]) .sep { grid-column: span 2; width: auto; height: 1px; margin: 2px 2px 5px; }
    `,
  ];

  private icon(name: string) {
    return html`<svg width="24" height="24" viewBox="0 0 24 24" aria-hidden="true">${ICONS[name]}</svg>`;
  }

  render() {
    return html`<span class="grip"></span>${this.items.map((i) =>
      i === "sep"
        ? html`<span class="sep"></span>`
        : i.menu
          ? html`<span class="split">
              <button class="main" aria-label=${i.name}>${this.icon(i.icon)}</button>
              <button class="caret" aria-label=${i.name + " options"}><svg width="11" height="7" viewBox="0 0 11 7"><path d="M0 0H11L5.500 7z" fill="#000" /></svg></button>
            </span>`
          : html`<button class=${i.on ? "tool on" : "tool"} aria-label=${i.name}>${this.icon(i.icon)}</button>`
    )}`;
  }
}

@customElement("plugin-bar")
class PluginBar extends LitElement {
  static styles = [
    barStyles,
    css`
      :host { display: flex; flex: none; background: #f1f1f1; border: solid #b0b0b0; border-width: 0 1px 1px 0; padding: 2px 1px 1px 0; }
      .grip { width: 10px; flex: none; background: repeating-linear-gradient(#bdbdbd 0 2px, #fafafa 2px 4px) 4px 0 / 2px 100% no-repeat; }
      .tool { width: 34px; height: 34px; }
    `,
  ];
  render() {
    return html`<span class="grip"></span>${PLUGIN_NAMES.map(
      ([id, name]) => html`<button class="tool" aria-label=${name}><svg width="32" height="32" viewBox="0 0 32 32" aria-hidden="true">${PLUGINS[id]}</svg></button>`
    )}`;
  }
}

/* ---------- the model ---------- */

type P = [number, number];
const EDGE: P[] = [[967, 413], [1317, 493], [1238, 609], [1591, 702], [1494, 1019], [615, 714]];
const OUTER: P[] = [[963, 406], [1333, 490], [1257, 606], [1609, 698], [1510, 1040], [592, 719]];
const CAVITY: P[] = [[966, 411], [1320, 492], [1242, 608], [1595, 701], [1497, 1023], [610, 715]];
const INNER: P[] = [[970, 417], [1308, 496], [1227, 611], [1579, 705], [1483, 1006], [629, 712]];
const ring = (a: P[], b: P[]) => `M${a.join("L")}ZM${b.join("L")}Z`;
const seg = (a: P, b: P) => `M${a}L${b}`;

const LABELS: [number, number, string][] = [
  [780, 543, "External"], [817, 553, "23' 4 5/16\""], [856, 564, "Internal"],
  [1149, 447, "External"], [1133, 464, "15' 2 13/16\""], [1117, 481, "Internal"],
  [1236, 550, "Internal"], [1278, 560, "9' 7/16\""], [1323, 571, "External"],
  [1418, 641, "External"], [1406, 666, "11' 7 1/16\""], [1393, 693, "Internal"],
  [1487, 835, "Internal"], [1546, 853, "14' 3 7/8\""], [1608, 872, "External"],
  [925, 792, "Internal"], [897, 825, "20' 2 3/8\""], [868, 860, "External"],
  [1234, 942, "External Width: ~ 4 5/16\""], [1234, 958, "Cavity: ~ 1 3/16\""],
  [1234, 974, "Internal Width: ~ 3 9/16\""], [1234, 990, "Overall Width: ~ 9 7/16\""],
  [1378, 943, "Internal"], [1359, 984, "6' 7 1/2\""], [1340, 1030, "External"], [1539, 1047, "180.0°"],
];

@customElement("model-view")
class ModelView extends LitElement {
  static styles = css`
    :host { display: block; position: relative; overflow: hidden; background: #fff; }
    .scene { position: absolute; inset: 0; width: 100%; height: 100%; display: block; }
    .label { font: 13px "Liberation Sans", Arial, sans-serif; fill: #000; }
    .line { fill: none; shape-rendering: crispEdges; }
    .edge { fill: none; stroke: #000; }
  `;
  render() {
    return html`<svg class="scene" viewBox="74 121 1844 972" preserveAspectRatio="xMinYMin slice" role="img" aria-label="Wall outline">
      <path class="line" d="M74 574.500 927 121" stroke="#00b400" />
      <path class="line" d="M74 607 1369 1093" stroke="#b40000" />
      <path class="line" d="M75.500 682 243.500 1093" stroke="#0000c8" stroke-dasharray="1 3" />
      ${LABELS.map(([x, y, s]) => svg`<text class="label" x=${x} y=${y}>${s}</text>`)}
      <path d=${ring(OUTER, CAVITY)} fill="#7533c2" fill-opacity=".5" fill-rule="evenodd" />
      <path d=${ring(EDGE, INNER)} fill="#7533c2" fill-opacity=".5" fill-rule="evenodd" />
      <path class="line" d=${seg(OUTER[5], CAVITY[5]) + seg(OUTER[1], CAVITY[1]) + seg(OUTER[3], CAVITY[3]) + seg(OUTER[4], CAVITY[4]) + seg(OUTER[2], CAVITY[2])} stroke="#9a74cc" stroke-dasharray="3 2" />
      <path class="line" d=${seg(INNER[0], INNER[1]) + seg(INNER[2], INNER[3]) + seg(INNER[4], INNER[5])} stroke="#f00018" />
      <path class="line" d=${seg(INNER[1], INNER[2]) + seg(INNER[3], INNER[4]) + seg(INNER[5], INNER[0]) + seg(INNER[4], EDGE[4]) + seg(INNER[5], EDGE[5]) + seg(INNER[2], EDGE[2])} stroke="#00dc00" />
      <path class="edge" d=${seg(EDGE[0], EDGE[1]) + seg(EDGE[2], EDGE[3]) + seg(EDGE[5], EDGE[0]) + seg(EDGE[1], EDGE[2])} stroke-width="2" />
      <path class="edge" d=${seg(EDGE[3], EDGE[4]) + seg(EDGE[4], EDGE[5])} stroke-width="3" />
      ${[EDGE[0], EDGE[1], EDGE[2], EDGE[3], EDGE[5]].map(([x, y]) => svg`<circle cx=${x} cy=${y} r="2" fill="#000"/>`)}
      <path class="line" d="M1234 929 1494 1019 1708 1093" stroke="#ff0000" />
      <circle cx="1234" cy="929" r="4" fill="none" stroke="#000" stroke-width="2" />
      <path class="line" d="M1361 974 1365 964 1372 953 1382 943 1397 935 1421 925 1438 922 1456 920 1477 922 1497 925 1521 931 1552 943 1583 963 1609 987 1626 1013 1635 1041V1067" stroke="#0000ff" />
    </svg>`;
  }
}

@customElement("app-root")
class AppRoot extends LitElement {
  static styles = [
    barStyles,
    css`
      :host { display: flex; flex-direction: column; height: 100vh; background: #f0f0f0; color: #000; font: 11px/16px "Open Sans", "Segoe UI", sans-serif; }
      .title { display: flex; align-items: center; height: 24px; padding: 0 1px 2px 4px; gap: 6px; background: #fff; }
      .name { flex: 1; }
      .win { width: 46px; height: 20px; }
      .controls { display: flex; }
      .menus { display: flex; gap: 1px; height: 17px; background: #fff; }
      .menu { padding: 0 7px; line-height: 16px; border: 0; }
      .bars { display: flex; }
      .body { flex: 1; display: flex; min-height: 0; }
      .side { width: 72px; flex: none; }
      model-view { flex: 1; border: solid; border-width: 2px 1px 1px 2px; border-color: #808080 #e3e3e3 #e3e3e3 #757575; margin-right: 1px; }
      .status { display: flex; padding: 0 0 1px; border-top: 1px solid #fff; }
      .measure { display: flex; align-items: center; height: 38px; width: 297px; padding-right: 4px; background: #f2f2f2; border: solid #b0b0b0; border-width: 0 1px 1px 0; }
      .grip { width: 15px; height: 32px; flex: none; background: repeating-linear-gradient(#bdbdbd 0 2px, #fafafa 2px 4px) 4px 0 / 2px 100% no-repeat; }
      .caption { flex: 1; }
      .value { width: 154px; height: 16px; border: 0; padding: 0; background: #fff; font: 11px/14px "Open Sans", "Segoe UI", sans-serif; outline: none; }
    `,
  ];

  render() {
    return html`
      <header class="title">
        <svg width="13" height="13" viewBox="0 0 13 13" aria-hidden="true">
          <path d="M0 2 7 0 13 2 12 9 5 13 1 11z" fill="#e2202a" />
          <path d="M3 4.500 9 3.500V7L5 8M5 10 10 7.500V5.500M3 4.500 5 5.500 8 5" fill="none" stroke="#fff" stroke-width="1.200" />
        </svg>
        <span class="name">Untitled - SketchUp Pro 2017</span>
        <span class="controls">
          <button class="win" aria-label="Minimize"><svg width="10" height="10"><path d="M0 5.500H10" stroke="#000" /></svg></button>
          <button class="win" aria-label="Restore"><svg width="10" height="10"><path d="M.500 2.500H7.500V9.500H.500zM2.500 2.500V.500H9.500V7.500H7.500" stroke="#000" /></svg></button>
          <button class="win" aria-label="Close"><svg width="10" height="10"><path d="M0 0 10 10M10 0 0 10" stroke="#000" /></svg></button>
        </span>
      </header>
      <nav class="menus">${MENUS.map((m) => html`<button class="menu">${m}</button>`)}</nav>
      <div class="bars">
        ${TOP_BARS.map((b) => html`<tool-bar role="toolbar" aria-label=${b.name} .items=${b.items}></tool-bar>`)}
      </div>
      <div class="bars"><plugin-bar role="toolbar" aria-label="Plugins"></plugin-bar></div>
      <main class="body">
        <aside class="side"><tool-bar vertical role="toolbar" aria-label="Large tool set" .items=${SIDE}></tool-bar></aside>
        <model-view></model-view>
      </main>
      <footer class="status">
        <div class="measure">
          <span class="grip"></span>
          <label class="caption" for="length">Length</label>
          <input class="value" id="length" type="text" .value=${"6' 7 1/2\""} />
        </div>
      </footer>
    `;
  }
}
